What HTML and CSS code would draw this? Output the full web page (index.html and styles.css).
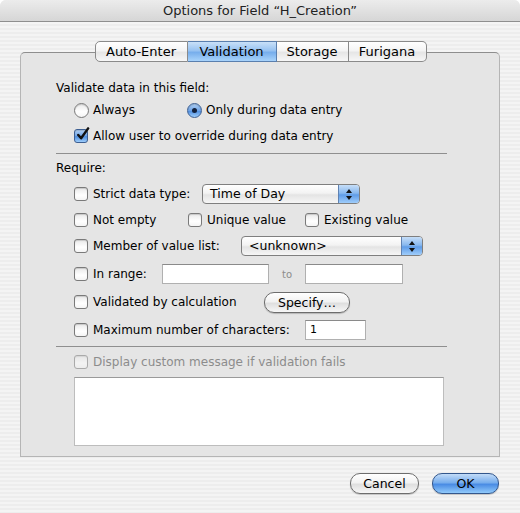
FILE: index.html
```html
<!DOCTYPE html>
<html lang="en">
<head>
  <meta charset="UTF-8">
  <title>Options for Field</title>
  <link rel="stylesheet" href="styles.css">
</head>
<body>

  <div class="window">
    <div class="titlebar">Options for Field “H_Creation”</div>

    <div class="tabs">
      <div class="tab tab-auto">Auto-Enter</div>
      <div class="tab tab-valid selected">Validation</div>
      <div class="tab tab-storage">Storage</div>
      <div class="tab tab-furi">Furigana</div>
    </div>

    <div class="panel">
      <div class="row heading">Validate data in this field:</div>

      <div class="row indent r-radios">
        <div class="option w-always"><span class="radio"></span>Always</div>
        <div class="option"><span class="radio on"></span>Only during data entry</div>
      </div>

      <div class="row indent r-allow">
        <div class="option"><span class="check on"><svg viewBox="0 0 16 16"><path d="M3.5 8.5 L6.5 12 L14 1.5" fill="none" stroke="#111" stroke-width="2.6" stroke-linecap="round" stroke-linejoin="round"/></svg></span>Allow user to override during data entry</div>
      </div>

      <div class="sep sep-1"></div>

      <div class="row heading r-require">Require:</div>

      <div class="row indent r-strict">
        <div class="option w-strict"><span class="check"></span>Strict data type:</div>
        <div class="popup w-popup1"><span class="popup-text">Time of Day</span><span class="arrows"><i class="up"></i><i class="down"></i></span></div>
      </div>

      <div class="row indent r-list">
        <div class="option w-notempty"><span class="check"></span>Not empty</div>
        <div class="option w-unique"><span class="check"></span>Unique value</div>
        <div class="option"><span class="check"></span>Existing value</div>
      </div>

      <div class="row indent r-list">
        <div class="option w-member"><span class="check"></span>Member of value list:</div>
        <div class="popup w-popup2"><span class="popup-text">&lt;unknown&gt;</span><span class="arrows"><i class="up"></i><i class="down"></i></span></div>
      </div>

      <div class="row indent r-range">
        <div class="option w-range"><span class="check"></span>In range:</div>
        <div class="field w-from"></div>
        <div class="to">to</div>
        <div class="field w-upto"></div>
      </div>

      <div class="row indent r-range">
        <div class="option w-calc"><span class="check"></span>Validated by calculation</div>
        <div class="btn w-specify">Specify…</div>
      </div>

      <div class="row indent r-range">
        <div class="option w-max"><span class="check"></span>Maximum number of characters:</div>
        <div class="field w-chars">1</div>
      </div>

      <div class="sep sep-2"></div>

      <div class="row indent r-display">
        <div class="option disabled"><span class="check"></span>Display custom message if validation fails</div>
      </div>

      <div class="message"></div>
    </div>

    <div class="buttons">
      <div class="btn w-cancel">Cancel</div>
      <div class="btn default w-ok">OK</div>
    </div>
  </div>

</body>
</html>
```

FILE: styles.css
```css
body {
  margin: 0;
  background: #fff;
  font-family: 'DejaVu Sans', sans-serif;
  font-size: 12px;
  color: #000;
}

.window {
  width: 520px;
  height: 513px;
  border-radius: 6px 6px 0 0;
  overflow: hidden;
  background: repeating-linear-gradient(to bottom, #ededed 0, #ededed 2px, #f4f4f4 2px, #f4f4f4 4px);
  display: flex;
  flex-direction: column;
}

.titlebar {
  height: 21px;
  border-bottom: 1px solid #8e8e8e;
  background: linear-gradient(to bottom, #ececec, #d6d6d6);
  text-align: center;
  line-height: 22px;
  font-size: 13px;
  color: #222;
}

/* tabs */
.tabs {
  display: flex;
  justify-content: center;
  margin: 19px 0 -10px 1px;
  position: relative;
  z-index: 1;
}

.tab {
  height: 19px;
  line-height: 19px;
  text-align: center;
  font-size: 13px;
  border: 1px solid #8a8a8a;
  border-left: none;
  background: linear-gradient(to bottom, #ffffff 0%, #f4f4f4 45%, #e6e6e6 55%, #f7f7f7 100%);
}

.tab-auto { width: 91px; border-left: 1px solid #8a8a8a; border-radius: 5px 0 0 5px; }
.tab-valid { width: 88px; }
.tab-storage { width: 71px; }
.tab-furi { width: 77px; border-radius: 0 5px 5px 0; }

.tab.selected {
  border-color: #5a7fae;
  background: linear-gradient(to bottom, #c9e0f8 0%, #97c2f1 45%, #77aeec 55%, #a8d3fb 100%);
}

/* panel */
.panel {
  box-sizing: border-box;
  margin: 0 20px;
  height: 405px;
  padding: 25px 52px 10px 35px;
  background: #e5e5e5;
  border: 1px solid #b5b5b5;
  border-top-color: #8e8e8e;
  border-radius: 5px 5px 0 0;
}

.row {
  display: flex;
  align-items: center;
  height: 20px;
}

.indent { margin-left: 18px; }
.r-radios { margin-top: 2px; }
.r-allow { margin-top: 6px; }
.r-require { margin-top: 4px; }
.r-strict, .r-list { margin-top: 6px; }
.r-range { margin-top: 8px; }
.r-display { margin-top: 5px; }

.sep {
  height: 1px;
  background: #8f8f8f;
}
.sep-1 { margin-top: 7px; }
.sep-2 { margin-top: 6px; }

.option {
  display: flex;
  align-items: center;
  white-space: nowrap;
}

.option.disabled { color: #8c8c8c; }
.option.disabled .check { opacity: 0.55; }

.w-always { width: 113px; }
.w-strict { width: 128px; }
.w-notempty { width: 114px; }
.w-unique { width: 117px; }
.w-member { width: 167px; }
.w-range { width: 88px; }
.w-calc { width: 190px; }
.w-max { width: 231px; }

/* checkbox and radio */
.check, .radio {
  flex: none;
  position: relative;
  width: 12px;
  height: 12px;
  margin-right: 5px;
  border: 1px solid #7a7a7a;
  background: linear-gradient(to bottom, #e9e9e9 0%, #ffffff 60%, #f4f4f4 100%);
  box-shadow: inset 0 1px 1px rgba(0, 0, 0, 0.15);
}

.check { border-radius: 3px; }

.radio {
  width: 13px;
  height: 13px;
  border-radius: 50%;
  margin-right: 4px;
}

.check.on, .radio.on {
  border-color: #3d5f92;
  background: linear-gradient(to bottom, #b3d2f5 0%, #6ea3e6 50%, #4f8edf 55%, #9dcdfb 100%);
}

.check svg {
  position: absolute;
  left: 0;
  top: -3px;
  width: 15px;
  height: 15px;
}

.radio.on::after {
  content: "";
  position: absolute;
  left: 4px;
  top: 4px;
  width: 5px;
  height: 5px;
  border-radius: 50%;
  background: #12213d;
}

/* popup menus */
.popup {
  display: flex;
  height: 18px;
  border: 1px solid #7f7f7f;
  border-radius: 4px;
  background: linear-gradient(to bottom, #ffffff 0%, #f3f3f3 45%, #e4e4e4 55%, #f6f6f6 100%);
  overflow: hidden;
}

.w-popup1 { width: 156px; }
.w-popup2 { width: 180px; }

.popup-text {
  flex: 1;
  padding-left: 7px;
  line-height: 18px;
  font-size: 12.5px;
}

.arrows {
  width: 20px;
  border-left: 1px solid #5f82b2;
  background: linear-gradient(to bottom, #c6def8 0%, #88b8ee 45%, #5f9ce7 55%, #9fcdfb 100%);
  display: flex;
  flex-direction: column;
  align-items: center;
  justify-content: center;
  gap: 3px;
}

.arrows i {
  width: 0;
  height: 0;
  border-left: 3px solid transparent;
  border-right: 3px solid transparent;
}

.arrows .up { border-bottom: 4px solid #111; }
.arrows .down { border-top: 4px solid #111; }

/* text fields */
.field {
  height: 18px;
  background: #fff;
  border: 1px solid #b0b0b0;
  border-top-color: #8a8a8a;
  font-size: 11px;
  line-height: 18px;
  padding-left: 4px;
}

.w-from { width: 101px; }
.w-upto { width: 92px; }
.w-chars { width: 55px; }

.to {
  width: 23px;
  margin-left: 13px;
  color: #8c8c8c;
  font-size: 10px;
}

.message {
  margin: 5px 0 0 18px;
  width: 368px;
  height: 67px;
  background: #fff;
  border: 1px solid #bdbdbd;
  border-top-color: #9a9a9a;
}

/* push buttons */
.btn {
  height: 19px;
  line-height: 19px;
  text-align: center;
  border: 1px solid #6d6d6d;
  border-radius: 10px;
  background: linear-gradient(to bottom, #ffffff 0%, #f2f2f2 45%, #dfdfdf 55%, #f7f7f7 100%);
  box-shadow: 0 1px 1px rgba(0, 0, 0, 0.2);
  font-size: 12.5px;
}

.w-specify { width: 84px; }

.buttons {
  display: flex;
  justify-content: flex-end;
  gap: 13px;
  margin-top: 16px;
  padding-right: 21px;
}

.w-cancel { width: 67px; }
.w-ok { width: 65px; }

.btn.default {
  border-color: #33578d;
  background: linear-gradient(to bottom, #c3dcf8 0%, #78aeed 45%, #4a8ce4 55%, #91cafb 100%);
}
```
